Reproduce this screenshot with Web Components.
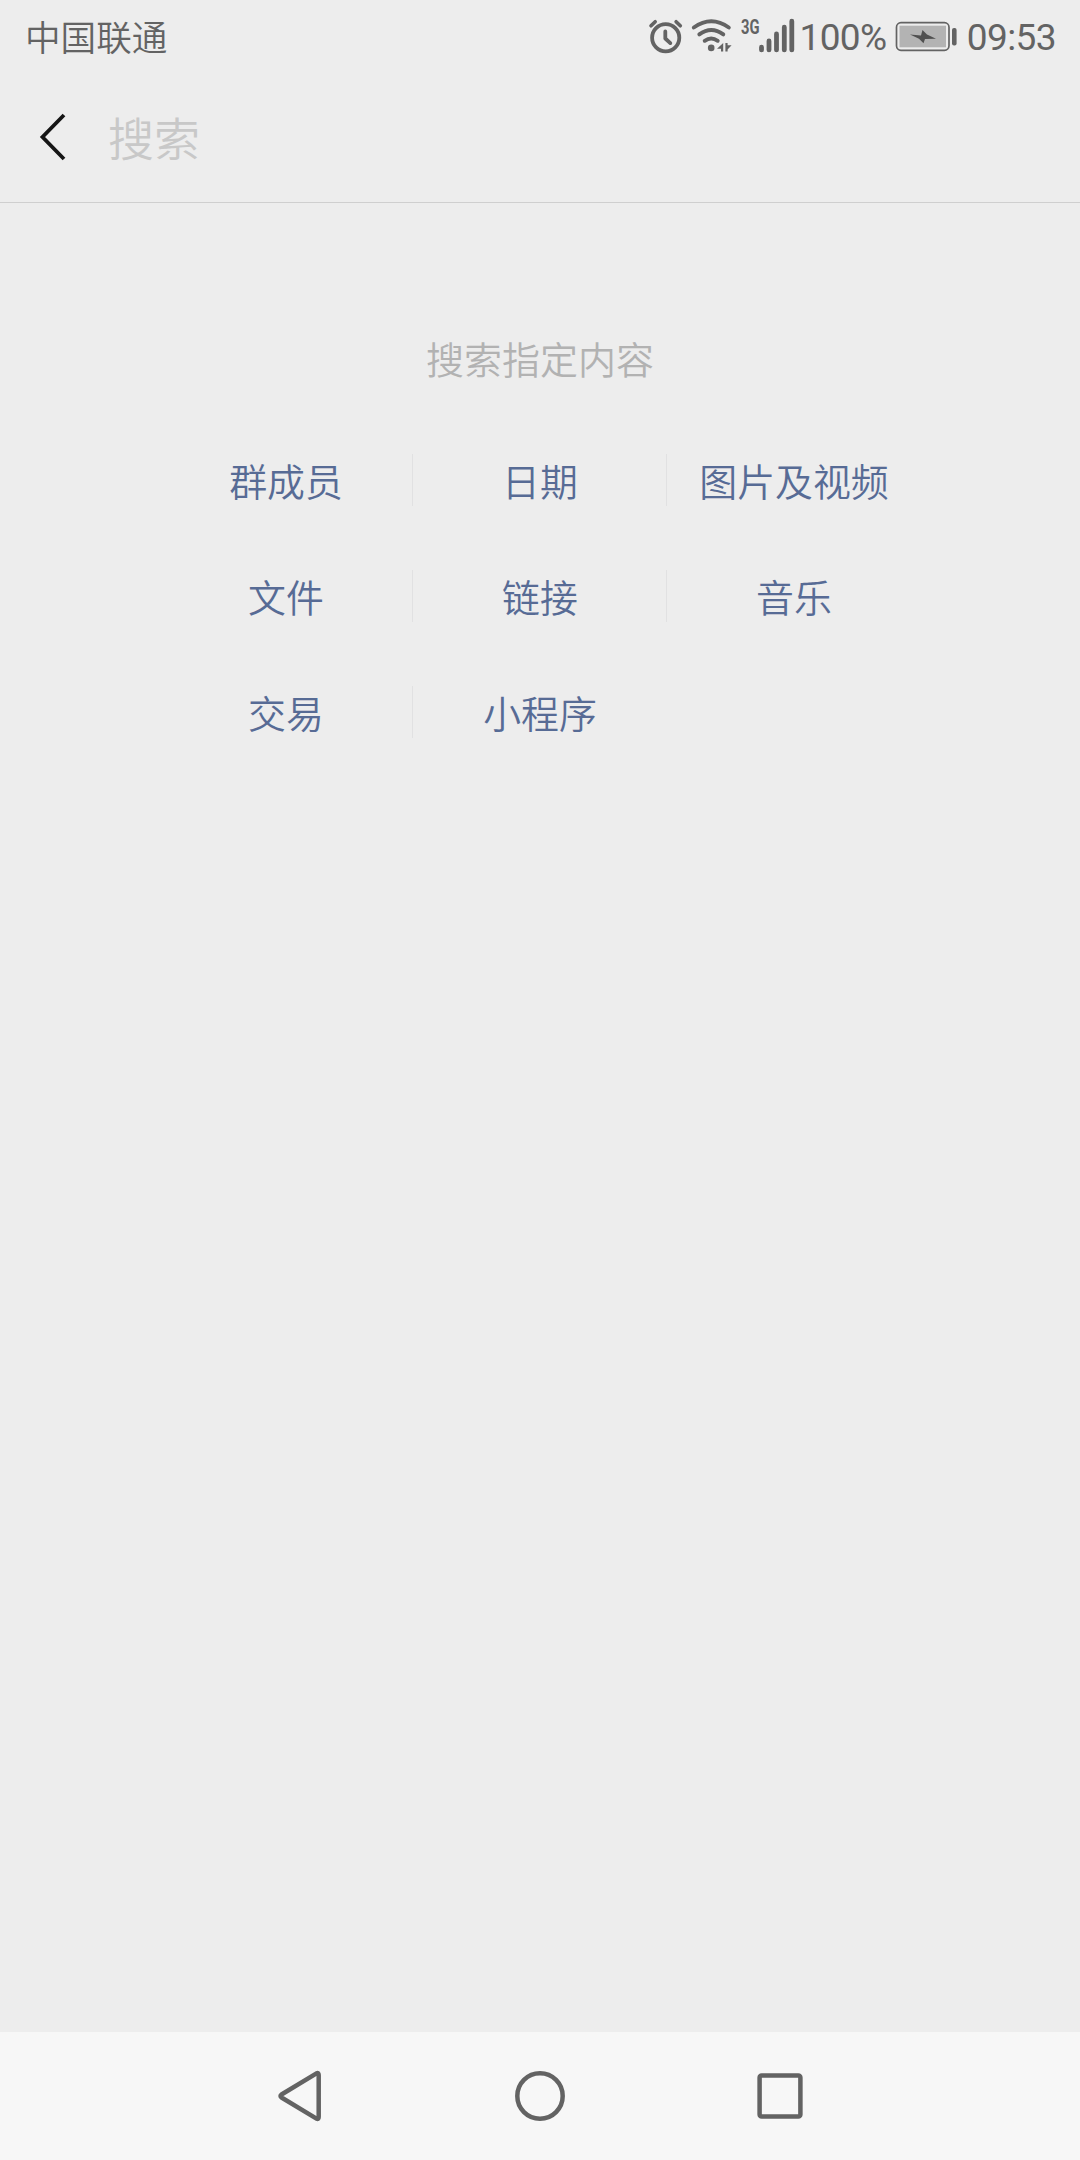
<!DOCTYPE html>
<html lang="zh-CN">
<head>
<meta charset="utf-8">
<title>搜索</title>
<style>
  html, body { margin: 0; padding: 0; }
  body {
    width: 1080px;
    height: 2160px;
    overflow: hidden;
    background: #ededed;
    font-family: Roboto, "Noto Sans CJK SC", sans-serif;
  }
</style>
</head>
<body>
<search-screen>
  <status-bar slot="status" carrier="中国联通" network="3G" battery="100%" time="09:53"></status-bar>
  <search-header slot="header" placeholder="搜索"></search-header>
  <search-filters heading="搜索指定内容">
    <filter-item>群成员</filter-item>
    <filter-item divider>日期</filter-item>
    <filter-item divider>图片及视频</filter-item>
    <filter-item>文件</filter-item>
    <filter-item divider>链接</filter-item>
    <filter-item divider>音乐</filter-item>
    <filter-item>交易</filter-item>
    <filter-item divider>小程序</filter-item>
  </search-filters>
  <nav-bar slot="nav"></nav-bar>
</search-screen>

<script>
class BaseElement extends HTMLElement {
  constructor() {
    super();
    this._shadow = this.attachShadow({ mode: 'open' });
  }

  connectedCallback() {
    this._render();
  }
}

class SearchScreen extends BaseElement {
  _render() {
    this._shadow.innerHTML = `
      <style>
        :host { display: flex; flex-direction: column; width: 1080px; height: 2160px; }
        main { flex: 1; }
      </style>
      <slot name="status"></slot>
      <slot name="header"></slot>
      <main><slot></slot></main>
      <slot name="nav"></slot>
    `;
  }
}

class StatusBar extends BaseElement {
  _render() {
    this._shadow.innerHTML = `
      <style>
        :host {
          display: flex;
          justify-content: space-between;
          height: 72px;
          box-sizing: border-box;
          padding: 0 24px 0 25px;
          color: #636363;
          font-size: 37px;
          line-height: 76px;
        }
        .carrier { font: 350 35.6px/71px "Noto Sans CJK SC", sans-serif; }
        .right { display: flex; }
        .level { letter-spacing: -0.6px; }
        .time { letter-spacing: -0.6px; }
        svg { display: block; height: 72px; }
        .battery { margin: 0 9.5px 0 8.8px; }
      </style>
      <span class="carrier">${this.getAttribute('carrier')}</span>
      <div class="right">
        <!-- alarm, wifi and signal -->
        <svg width="151" height="72" viewBox="648 0 151 72" fill="none" stroke="#636363" stroke-linecap="round">
          <circle cx="665.7" cy="37.7" r="13.6" stroke-width="3.8"/>
          <path d="M665.3 31.5v7l5 4.6" stroke-width="3.8" stroke-linejoin="round"/>
          <path d="M651 25.800l4.200-4.100M680.300 25.800l-4.200-4.100" stroke-width="3.600"/>
          <path d="M693.800 27.500q17.500-12.500 35 0M699.300 34.400q12-8.800 24 0M704.700 40.800q6.500-4.600 13 0" stroke-width="3.900"/>
          <circle cx="711.2" cy="47.900" r="3.300" fill="#636363" stroke="none"/>
          <path d="M723.200 43v8.600h-2.200v-2.800h-4zM725.400 43v8.600h2.200v-2.200l4-4.200h-4v-2.200z" fill="#636363" stroke="none"/>
          <text x="741" y="34" font-size="20.500" font-weight="700" textLength="18.500" lengthAdjust="spacingAndGlyphs" fill="#636363" stroke="none">${this.getAttribute('network')}</text>
          <path d="M761.500 47.200v2.700M769 41v8.900M776.500 34v15.900M784.300 27.200v22.700M791.800 21.200v28.700" stroke-width="4.800"/>
        </svg>
        <span class="level">${this.getAttribute('battery')}</span>
        <svg class="battery" width="62" height="72" viewBox="895 0 62 72">
          <rect x="896.5" y="22.700" width="52.500" height="27.600" rx="4.500" fill="none" stroke="#636363" stroke-width="1.700"/>
          <rect x="899.500" y="25.700" width="46.500" height="21.600" fill="#b3b3b3"/>
          <path d="M910 34.500l11 1 1.500-5.500 4.500 4.500 9 4.200-11 .2-1.500 4.300-4.500-4.500z" fill="#505050"/>
          <rect x="952" y="28" width="4.600" height="17.500" rx="2" fill="#636363"/>
        </svg>
        <span class="time">${this.getAttribute('time')}</span>
      </div>
    `;
  }
}

class SearchHeader extends BaseElement {
  _render() {
    this._shadow.innerHTML = `
      <style>
        :host {
          display: flex;
          align-items: center;
          height: 131px;
          box-sizing: border-box;
          padding-left: 38px;
          border-bottom: 1px solid #cfcfcf;
        }
        svg { display: block; margin-right: 38px; }
        span {
          padding-bottom: 2px;
          color: #c8c8c8;
          font: 350 46px/128px "Noto Sans CJK SC", sans-serif;
        }
      </style>
      <svg width="32" height="50" viewBox="0 0 32 50">
        <path d="M26 3L4.500 25 26 47" fill="none" stroke="#161616" stroke-width="3.800"/>
      </svg>
      <span>${this.getAttribute('placeholder')}</span>
    `;
  }
}

class SearchFilters extends BaseElement {
  _render() {
    this._shadow.innerHTML = `
      <style>
        :host { display: block; padding-top: 125px; }
        h2 {
          margin: 0;
          color: #b2b2b2;
          text-align: center;
          font: 350 38px/60px "Noto Sans CJK SC", sans-serif;
        }
        .grid {
          display: grid;
          grid-template-columns: repeat(3, 254px);
          grid-auto-rows: 52px;
          row-gap: 64px;
          justify-content: center;
          margin-top: 66px;
        }
      </style>
      <h2>${this.getAttribute('heading')}</h2>
      <div class="grid"><slot></slot></div>
    `;
  }
}

class FilterItem extends BaseElement {
  _render() {
    this._shadow.innerHTML = `
      <style>
        :host {
          display: block;
          color: #576b95;
          text-align: center;
          white-space: nowrap;
          font: 350 37.9px/51px "Noto Sans CJK SC", sans-serif;
        }
        :host([divider]) { box-shadow: -1px 0 #e1e1e2; }
      </style>
      <slot></slot>
    `;
  }
}

class NavBar extends BaseElement {
  _render() {
    this._shadow.innerHTML = `
      <style>
        :host {
          display: grid;
          grid-template-columns: repeat(3, 240px);
          justify-content: center;
          place-items: center;
          height: 128px;
          background: #f7f7f7;
        }
        svg { display: block; fill: none; stroke: #636363; stroke-width: 4.5; }
      </style>
      <svg width="60" height="60" viewBox="0 0 60 60"><path d="M46.500 7.300Q48.700 6.500 48.700 9V51Q48.700 53.500 46.500 52.700L11.500 31.500Q9.500 30 11.500 28.500Z" stroke-linejoin="round"/></svg>
      <svg width="60" height="60" viewBox="0 0 60 60"><circle cx="30" cy="30" r="22.700"/></svg>
      <svg width="60" height="60" viewBox="0 0 60 60"><rect x="9.600" y="9.600" width="40.800" height="40.800" rx="2"/></svg>
    `;
  }
}

customElements.define('search-screen', SearchScreen);
customElements.define('status-bar', StatusBar);
customElements.define('search-header', SearchHeader);
customElements.define('search-filters', SearchFilters);
customElements.define('filter-item', FilterItem);
customElements.define('nav-bar', NavBar);
</script>
</body>
</html>
